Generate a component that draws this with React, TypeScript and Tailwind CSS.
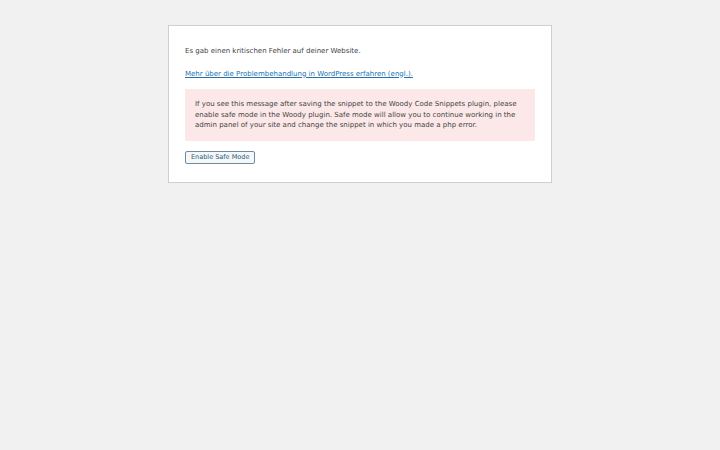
export default function App() {
  return (
    <div className="min-h-[450px] w-full bg-[#f1f1f1] pt-[25px]" style={{ fontFamily: '"DejaVu Sans", sans-serif' }}>
      <div className="mx-auto w-[384px] border border-[#ccd0d4] bg-white px-[16px] pb-[18px] pt-[7px] text-[7px] leading-[10.5px] text-[#444]">
        <p className="mt-[12.5px] mb-[10px]">Es gab einen kritischen Fehler auf deiner Website.</p>
        <p className="mt-[12.5px] mb-[10px]">
          <a href="#" className="text-[#2271b1] underline">Mehr über die Problembehandlung in WordPress erfahren (engl.).</a>
        </p>
        <div className="bg-[#fce8e8] p-[10px]">
          If you see this message after saving the snippet to the Woody Code Snippets plugin, please enable safe mode in the Woody plugin. Safe mode will allow you to continue working in the admin panel of your site and change the snippet in which you made a php error.
        </div>
        <div className="mt-[10px] flex">
          <button className="h-[13px] rounded-[2px] border border-[#6f8ba3] bg-[#f6f7f7] px-[5px] text-[6.5px] leading-[11px] text-[#2a5c80]">Enable Safe Mode</button>
        </div>
      </div>
    </div>
  );
}
